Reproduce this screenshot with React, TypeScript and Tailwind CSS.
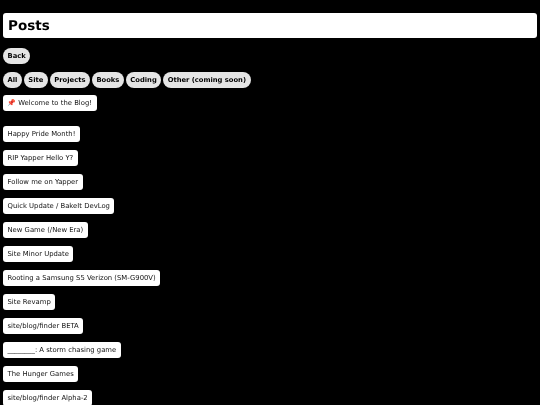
const FILTERS = ["All", "Site", "Projects", "Books", "Coding", "Other (coming soon)"];

const POSTS = [
  "Happy Pride Month!",
  "RIP Yapper Hello Y?",
  "Follow me on Yapper",
  "Quick Update / BakeIt DevLog",
  "New Game (/New Era)",
  "Site Minor Update",
  "Rooting a Samsung S5 Verizon (SM-G900V)",
  "Site Revamp",
  "site/blog/finder BETA",
  "________: A storm chasing game",
  "The Hunger Games",
  "site/blog/finder Alpha-2",
];

function Pill({ label }: { label: string }) {
  return (
    <button className="h-4 rounded-full bg-[#e5e5e5] px-[4.5px] text-[6.75px] leading-4 font-bold text-black">
      {label}
    </button>
  );
}

function PostLink({ label }: { label: string }) {
  return (
    <div className="flex h-4 w-fit items-center rounded-[3px] bg-white px-[4.5px] text-[6.85px] text-[#111]">
      {label}
    </div>
  );
}

export default function App() {
  return (
    <div className="h-[405px] overflow-hidden bg-black px-[3px] pt-[13px] font-['DejaVu_Sans',sans-serif] [text-rendering:geometricPrecision] [will-change:transform]">
      <h1 className="flex h-[25px] items-center rounded-[3px] bg-white px-[5px] pt-px text-[13.5px] font-bold text-black">
        Posts
      </h1>

      <div className="mt-[10px] flex">
        <Pill label="Back" />
      </div>

      <div className="mt-2 flex gap-[2px]">
        {FILTERS.map((f) => (
          <Pill key={f} label={f} />
        ))}
      </div>

      <div className="mt-[7px]">
        <PostLink label="📌 Welcome to the Blog!" />
      </div>

      <div className="mt-[15px] flex flex-col gap-2">
        {POSTS.map((p) => (
          <PostLink key={p} label={p} />
        ))}
      </div>
    </div>
  );
}
